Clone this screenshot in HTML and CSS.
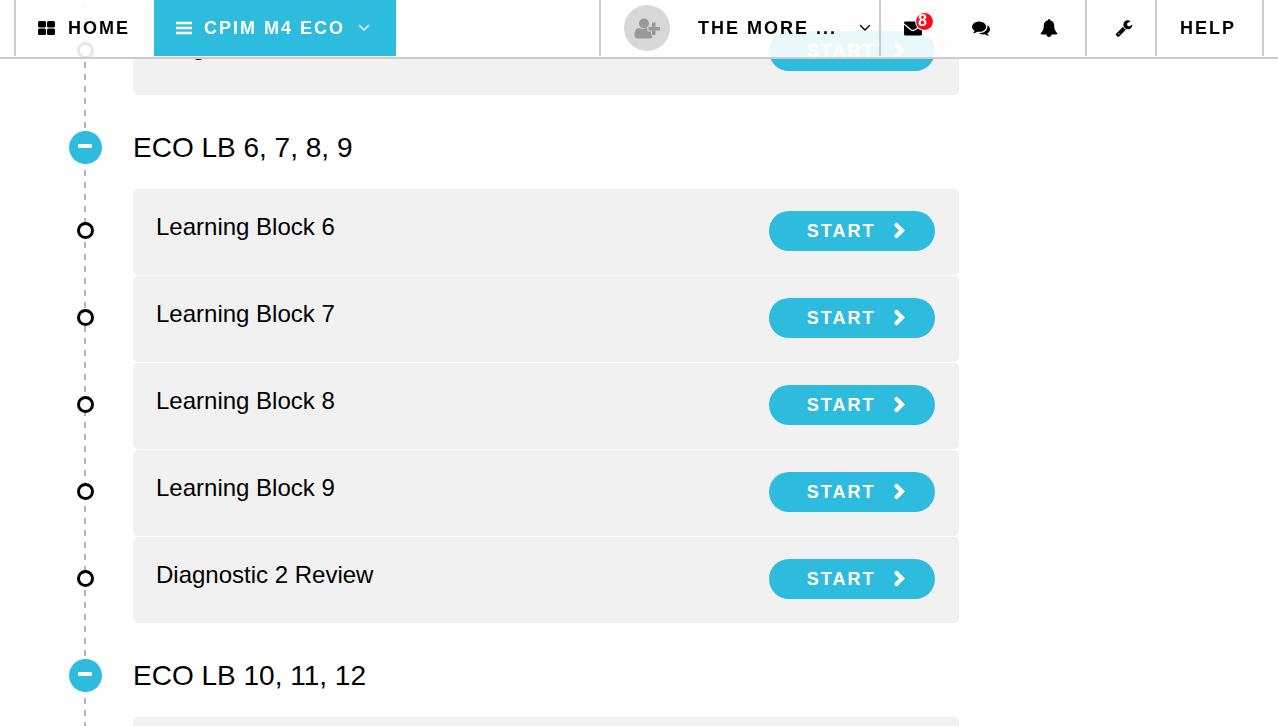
FILE: index.html
```html
<!DOCTYPE html>
<html lang="en">
<head>
<meta charset="utf-8">
<title>CPIM M4 ECO</title>
<link rel="stylesheet" href="styles.css">
</head>
<body>
<svg class="defs" aria-hidden="true">
  <symbol id="chevron" viewBox="0 0 12 18"><path d="M3.500 3 9 8.500 3.500 14" fill="none" stroke="currentColor" stroke-width="4.200" stroke-linecap="round" stroke-linejoin="miter"/></symbol>
  <symbol id="caret" viewBox="0 0 12 8"><path d="M1.500 1.500 6 6l4.500-4.500" fill="none" stroke="currentColor" stroke-width="1.400" stroke-linecap="round"/></symbol>
</svg>

<header class="topbar">
  <nav class="nav nav-main">
    <a class="nav-item nav-home" href="#">
      <svg class="icon-grid" viewBox="0 0 17 14" aria-hidden="true"><rect width="8" height="6.500" rx="1.500"/><rect x="9" width="8" height="6.500" rx="1.500"/><rect y="7.500" width="8" height="6.500" rx="1.500"/><rect x="9" y="7.500" width="8" height="6.500" rx="1.500"/></svg>
      HOME
    </a>
    <button class="nav-item nav-course" type="button">
      <svg class="icon-bars" viewBox="0 0 16 14" aria-hidden="true"><path d="M0 2h16M0 7h16M0 12h16" stroke="currentColor" stroke-width="2.300"/></svg>
      <span class="course-name">CPIM M4 ECO</span>
      <svg class="icon-caret" aria-hidden="true"><use href="#caret"/></svg>
    </button>
  </nav>
  <nav class="nav nav-user">
    <button class="nav-item nav-profile" type="button">
      <span class="avatar">
        <svg viewBox="0 0 26 21" aria-hidden="true"><circle cx="10" cy="5.500" r="5"/><path d="M5.500 10C2 10 .5 13 .5 17.500c0 2 1 3 3 3h12.500c1.500 0 2.500-1 2.500-2.500v-1.500h-1v-3h-4v-4c-2.500 1.500-5.500 2-8 .5z"/><path d="M18 4.500h3.500V9H26v3.500h-4.500V17H18v-4.500h-3.500V9H18z"/></svg>
      </span>
      <span class="profile-name">THE MORE ...</span>
      <svg class="icon-caret" aria-hidden="true"><use href="#caret"/></svg>
    </button>
    <div class="nav-item nav-alerts">
      <button class="icon-button" type="button" aria-label="Messages">
        <svg class="icon-mail" viewBox="0 0 18 15" aria-hidden="true"><path d="M1 .5h16q1 0 1 1.500v11q0 1.500-1.500 1.500h-15Q0 14.500 0 13V2Q0 .5 1 .5z"/><path d="M0 3l6.500 5.500q2.500 2 5 0L18 3" fill="none" stroke="#fff" stroke-width="1.300"/></svg>
        <span class="badge">8</span>
      </button>
      <button class="icon-button" type="button" aria-label="Chat">
        <svg class="icon-fa" viewBox="0 0 1792 1792" aria-hidden="true"><path d="M1408 768q0 139-94 257t-256.500 186.500-353.500 68.500q-86 0-176-16-124 88-278 128-36 9-86 16h-3q-11 0-20.500-8t-11.500-21q-1-3-1-6.500t.5-6.500 2-6l2.500-5 3.500-5.500 4-5 4.500-5 4-4.500q5-6 23-25t26-29.500 22.500-29 25-38.500 20.500-44q-124-72-195-177t-71-224q0-139 94-257t256.500-186.500 353.500-68.500 353.500 68.500 256.500 186.500 94 257zm384 256q0 120-71 224.500t-195 176.500q10 24 20.500 44t25 38.500 22.500 29 26 29.500 23 25q1 1 4 4.500t4.500 5 4 5 3.500 5.500l2.500 5 2 6 .5 6.500-1 6.500q-3 14-13 22t-22 7q-50-7-86-16-154-40-278-128-90 16-176 16-271 0-472-132 58 4 88 4 161 0 309-45t264-129q125-92 192-212t67-254q0-77-23-152 129 71 204 178t75 230z"/></svg>
      </button>
      <button class="icon-button" type="button" aria-label="Notifications">
        <svg class="icon-fa" viewBox="0 0 1792 1792" aria-hidden="true"><path d="M1728 1408q0 52-38 90t-90 38h-448q0 106-75 181t-181 75-181-75-75-181h-448q-52 0-90-38t-38-90q50-42 91-88t85-119.500 74.500-158.500 50-206 19.500-260q0-152 117-282.500t307-158.500q-8-19-8-39 0-40 28-68t68-28 68 28 28 68q0 20-8 39 190 28 307 158.500t117 282.500q0 139 19.500 260t50 206 74.500 158.500 85 119.500 91 88z"/></svg>
      </button>
    </div>
    <button class="nav-item nav-tools" type="button" aria-label="Tools">
      <svg class="icon-fa" viewBox="0 0 1792 1792" aria-hidden="true"><path d="M448 1472q0-26-19-45t-45-19-45 19-19 45 19 45 45 19 45-19 19-45zm644-420l-682 682q-37 37-90 37-52 0-91-37l-106-108q-38-36-38-90 0-53 38-91l681-681q39 98 114.500 173.500t173.500 114.500zm634-435q0 39-23 106-47 134-164.500 217.500t-258.500 83.500q-185 0-316.500-131.500t-131.500-316.500 131.500-316.500 316.500-131.500q58 0 121.500 16.500t107.500 46.500q16 11 16 28t-16 28l-293 169v224l193 107q5-3 79-48.500t135.500-81 70.500-35.500q15 0 23.500 10t8.500 25z"/></svg>
    </button>
    <a class="nav-item nav-help" href="#">HELP</a>
  </nav>
</header>

<main class="timeline">
  <section class="group">
    <div class="row"><span class="bullet"></span><div class="card"><h3 class="title">Diagnostic 1 Review</h3><button class="start" type="button">START<svg aria-hidden="true"><use href="#chevron"/></svg></button></div></div>
  </section>

  <section class="group">
    <div class="group-head"><button class="toggle" type="button" aria-label="Collapse ECO LB 6, 7, 8, 9"><span class="minus"></span></button><h2 class="group-title">ECO LB 6, 7, 8, 9</h2></div>
    <div class="row"><span class="bullet"></span><div class="card"><h3 class="title">Learning Block 6</h3><button class="start" type="button">START<svg aria-hidden="true"><use href="#chevron"/></svg></button></div></div>
    <div class="row"><span class="bullet"></span><div class="card"><h3 class="title">Learning Block 7</h3><button class="start" type="button">START<svg aria-hidden="true"><use href="#chevron"/></svg></button></div></div>
    <div class="row"><span class="bullet"></span><div class="card"><h3 class="title">Learning Block 8</h3><button class="start" type="button">START<svg aria-hidden="true"><use href="#chevron"/></svg></button></div></div>
    <div class="row"><span class="bullet"></span><div class="card"><h3 class="title">Learning Block 9</h3><button class="start" type="button">START<svg aria-hidden="true"><use href="#chevron"/></svg></button></div></div>
    <div class="row"><span class="bullet"></span><div class="card"><h3 class="title">Diagnostic 2 Review</h3><button class="start" type="button">START<svg aria-hidden="true"><use href="#chevron"/></svg></button></div></div>
  </section>

  <section class="group">
    <div class="group-head"><button class="toggle" type="button" aria-label="Collapse ECO LB 10, 11, 12"><span class="minus"></span></button><h2 class="group-title">ECO LB 10, 11, 12</h2></div>
    <div class="row"><span class="bullet"></span><div class="card"></div></div>
  </section>
</main>
</body>
</html>
```

FILE: styles.css
```css
* { box-sizing: border-box; }

body {
  margin: 0;
  height: 100vh;
  overflow: hidden;
  background: #fff;
  color: #000;
  font-family: "Liberation Sans", Arial, sans-serif;
}

button {
  margin: 0;
  padding: 0;
  border: 0;
  background: none;
  color: inherit;
  font: inherit;
  letter-spacing: inherit;
  cursor: pointer;
}

a { color: inherit; text-decoration: none; }
svg { display: block; flex: none; fill: currentColor; }
.defs { position: absolute; width: 0; height: 0; }

/* Top bar */
.topbar {
  position: fixed;
  top: 0;
  left: 0;
  right: 0;
  z-index: 10;
  display: flex;
  justify-content: space-between;
  padding: 0 14px 1px;
  border-bottom: 2px solid #ccc;
  background: rgba(255, 255, 255, 0.9);
  font-size: 18px;
  font-weight: bold;
  letter-spacing: 2px;
}

.nav { display: flex; height: 56px; }
.nav-item { display: flex; align-items: center; border-left: 2px solid #ccc; white-space: nowrap; }
.nav-home { gap: 13px; padding: 0 24px 0 22px; }
.nav-course { padding: 0 26px 0 22px; border-left: 0; background: #2dbbde; color: #fff; }
.course-name { margin: 0 13px 0 12px; }
.nav-user { border-right: 2px solid #ccc; }
.nav-profile { padding: 0 8px 0 23px; }
.profile-name { margin: 0 22px 0 28px; }
.nav-alerts { gap: 50px; padding: 0 27px 0 23px; }
.nav-tools { padding: 0 22px 0 28px; }
.nav-help { padding: 0 26px 0 23px; }

.icon-grid { width: 17px; height: 14px; }
.icon-bars { width: 16px; height: 14px; }
.icon-caret { width: 12px; height: 8px; }
.icon-fa { width: 18px; height: 18px; }
.icon-mail { width: 18px; height: 15px; }

.avatar {
  display: flex;
  align-items: center;
  justify-content: center;
  width: 46px;
  height: 46px;
  border-radius: 50%;
  background: #d8d8d8;
  color: #999;
}
.avatar svg { width: 26px; height: 21px; }
.avatar path:last-child { stroke: #d8d8d8; stroke-width: 1.5px; paint-order: stroke; }

.icon-button { position: relative; }
.badge {
  position: absolute;
  top: -8px;
  left: 12px;
  width: 17px;
  height: 17px;
  border-radius: 50%;
  background: #fc0d1b;
  box-shadow: 0 0 0 1px #fff;
  color: #fff;
  font-size: 16px;
  line-height: 16px;
  letter-spacing: 0;
  text-align: left;
  padding-left: 2px;
}

/* Timeline */
.timeline {
  width: 75%;
  padding: 9px 0 0 69px;
  background: repeating-linear-gradient(to bottom, transparent 0 2px, #b3b3b3 2px 8px, transparent 8px 12px) 84px 0 / 2px 100% no-repeat;
}

.group-head { display: flex; align-items: center; gap: 31px; padding: 36px 0 25px; }
.toggle {
  display: flex;
  align-items: center;
  justify-content: center;
  width: 33px;
  height: 33px;
  border-radius: 50%;
  background: #2dbbde;
}
.minus { width: 14px; height: 4px; margin: 0 1px 3px 0; border-radius: 1px; background: #fff; }
.group-title { margin: 0; font-size: 28px; line-height: 33px; font-weight: normal; }

.row { display: flex; gap: 39px; padding-left: 8px; }
.row + .row { margin-top: 1px; }
.bullet {
  flex: none;
  width: 17px;
  height: 17px;
  margin-top: 33px;
  border: 3px solid #000;
  border-radius: 50%;
  background: #fff;
}
.card {
  flex: 1;
  display: flex;
  align-items: flex-start;
  justify-content: space-between;
  min-height: 86px;
  padding: 22px 24px 24px 23px;
  border-radius: 5px;
  background: #f1f1f1;
}
.title { margin: 2px 0 0; font-size: 24px; line-height: 28px; font-weight: normal; }

.start {
  display: flex;
  align-items: center;
  gap: 17px;
  height: 40px;
  padding: 0 30px 0 38px;
  border-radius: 20px;
  background: #2dbbde;
  color: #fff;
  font-size: 18px;
  font-weight: bold;
  letter-spacing: 2px;
}
.start svg { width: 12px; height: 18px; }
```
